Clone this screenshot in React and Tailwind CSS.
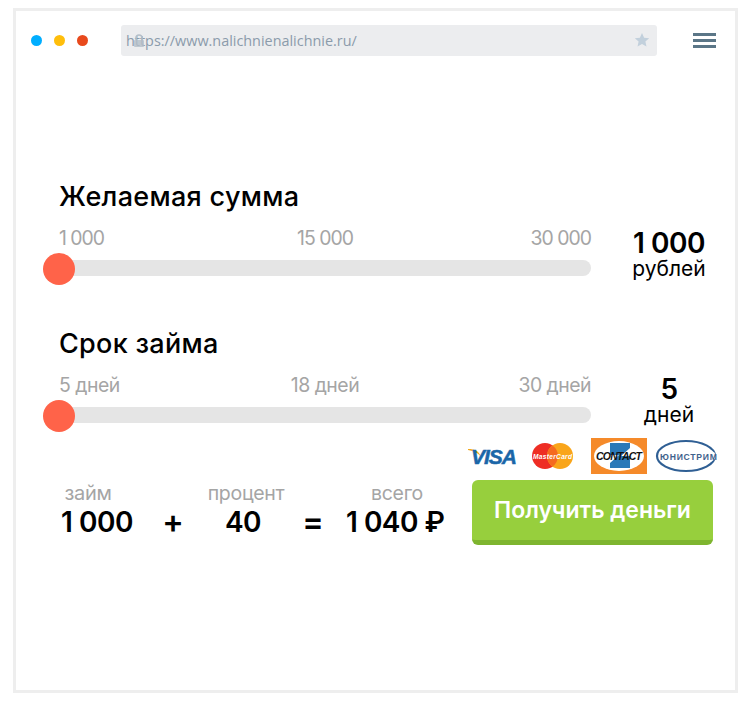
const sans = { fontFamily: '"Inter","Liberation Sans",sans-serif' };

function Logos() {
  return (
    <div className="flex items-center h-[36px] ml-[-5px] w-[250px]">
      <svg width="60" height="36" viewBox="0 0 60 36" className="shrink-0">
        <path d="M1 11 C8 11 12 13 14 19 C11 15 7 13 1 12Z" fill="#f0a91f" />
        <text x="4" y="26" fontFamily="Liberation Sans" fontWeight="700" fontStyle="italic" fontSize="21" fill="#1a66a8" stroke="#1a66a8" strokeWidth="0.5" textLength="46">VISA</text>
      </svg>
      <svg width="50" height="36" viewBox="0 0 50 36" className="ml-[4px] shrink-0">
        <circle cx="14" cy="18" r="13" fill="#ee2d24" />
        <circle cx="29" cy="18" r="13" fill="#f9a51a" />
        <path d="M21.500 7.400a13 13 0 0 1 0 21.200a13 13 0 0 1 0-21.200Z" fill="#f56a1f" />
        <text x="2" y="20.500" fontFamily="Liberation Sans" fontStyle="italic" fontWeight="700" fontSize="6.6" fill="#ffffff" textLength="39">MasterCard</text>
      </svg>
      <svg width="56" height="36" viewBox="0 0 56 36" className="ml-[10px] shrink-0">
        <rect width="56" height="36" fill="#f58a2a" />
        <ellipse cx="28" cy="18" rx="25" ry="15" fill="#ffffff" />
        <path d="M19 5h20v5l-9 8h9v12h-20v-5l9-8h-9Z" fill="#2a79b8" />
        <text x="5" y="22" fontFamily="Liberation Sans" fontStyle="italic" fontWeight="700" fontSize="10.5" fill="#111" textLength="46">CONTACT</text>
      </svg>
      <svg width="62" height="36" viewBox="0 0 62 36" className="ml-[8px] shrink-0">
        <ellipse cx="31" cy="18" rx="29" ry="15" fill="none" stroke="#2f5f94" strokeWidth="2.2" />
        <ellipse cx="34" cy="18" rx="27" ry="10" fill="#ffffff" />
        <text x="5" y="21.500" fontFamily="Liberation Sans" fontWeight="700" fontSize="8.6" fill="#3f628c" textLength="57">ЮНИСТРИМ</text>
      </svg>
    </div>
  );
}

function Slider({ title, labels, value, unit, top, labelClass }) {
  return (
    <div className="flex">
      <div className="w-[532px] shrink-0">
        <div className="text-[27px] leading-[32px] font-medium text-black tracking-[0.3px]" style={sans}>{title}</div>
        <div className={"grid grid-cols-3 mt-[13px] text-[#a5a5a5] leading-[24px] " + labelClass} style={sans}>
          <span className="text-left">{labels[0]}</span>
          <span className="text-center">{labels[1]}</span>
          <span className="text-right">{labels[2]}</span>
        </div>
        <div className="relative h-[16px] mt-[10px] rounded-full bg-[#e5e5e5]">
          <div className="absolute left-[-16px] top-[-7px] w-[32px] h-[32px] rounded-full bg-[#ff6349]" />
        </div>
      </div>
      <div className="w-[156px] shrink-0 text-center text-black" style={{ ...sans, paddingTop: top }}>
        <div className="text-[28px] leading-[30px] font-semibold tracking-[-0.5px]">{value}</div>
        <div className="text-[21px] leading-[20px] mt-[1px]">{unit}</div>
      </div>
    </div>
  );
}

function Stat({ label, value, w, labelClass }) {
  return (
    <div className={w + " shrink-0 text-center"} style={sans}>
      <div className={"flex justify-center leading-[22px] text-[#a5a5a5] tracking-[-0.3px] whitespace-nowrap " + labelClass}>{label}</div>
      <div className="mt-[2px] text-[28px] leading-[32px] font-semibold text-black tracking-[-0.5px] whitespace-nowrap">{value}</div>
    </div>
  );
}

export default function App() {
  return (
    <div className="w-[751px] h-[709px] bg-white pt-[8px] pl-[13px]">
      <div className="w-[725px] h-[685px] border-[3px] border-[#eeeeee] bg-white">
        <div className="flex items-center pt-[14px] pl-[15px]">
          <div className="flex gap-[12px] w-[90px]">
            <span className="w-[11px] h-[11px] rounded-full bg-[#00aeff]" />
            <span className="w-[11px] h-[11px] rounded-full bg-[#ffbe0b]" />
            <span className="w-[11px] h-[11px] rounded-full bg-[#e8491c]" />
          </div>
          <div className="relative flex items-center justify-between w-[536px] h-[31px] rounded-[3px] bg-[#ecedef] pl-[5px] pr-[7px]">
            <span className="text-[14.4px] text-[#8b9bab]" style={{ fontFamily: '"Open Sans",sans-serif' }}>https://www.nalichnienalichnie.ru/</span>
            <svg viewBox="0 0 12 14" className="absolute left-[12px] top-[9px] w-[12px] h-[14px]" aria-hidden="true">
              <path d="M3 6V4a3 3 0 0 1 6 0v2" fill="none" stroke="#b4bec8" strokeWidth="1.5" />
              <rect x="1" y="6" width="10" height="7" rx="1" fill="#b4bec8" opacity="0.8" />
            </svg>
            <svg viewBox="0 0 24 24" className="w-[16px] h-[16px] mt-[-2px]">
              <path d="M12 1.500l3.200 7 7.600.8-5.700 5.100 1.600 7.500L12 18l-6.700 3.900 1.600-7.500L1.200 9.300l7.600-.8Z" fill="#c2d0dc" />
            </svg>
          </div>
          <div className="ml-[36px] flex flex-col gap-[3px] w-[23px]">
            <span className="h-[3px] bg-[#5b7687]" />
            <span className="h-[3px] bg-[#5b7687]" />
            <span className="h-[3px] bg-[#5b7687]" />
          </div>
        </div>

        <div className="pl-[43px] pt-[125px]">
          <Slider title="Желаемая сумма" labels={["1 000", "15 000", "30 000"]} value="1 000" unit="рублей" top="47px" labelClass="text-[19.4px] tracking-[-1px]" />
          <div className="mt-[49px]">
            <Slider title="Срок займа" labels={["5 дней", "18 дней", "30 дней"]} value="5" unit="дней" top="46px" labelClass="text-[19.4px] tracking-[-0.5px]" />
          </div>
        </div>

        <div className="flex justify-between pl-[43px] pr-[22px] mt-[13px]">
          <div className="flex items-start pt-[44px]">
            <Stat label="займ" value="1 000" w="w-[76px]" labelClass="text-[20px] pr-[18px]" />
            <div className="w-[76px] pt-[24px] text-center text-[32px] leading-[32px] font-semibold text-black" style={sans}>+</div>
            <Stat label="процент" value="40" w="w-[64px]" labelClass="text-[19.5px] pl-[6px]" />
            <div className="w-[76px] pt-[24px] text-center text-[32px] leading-[32px] font-semibold text-black" style={sans}>=</div>
            <Stat label="всего" value="1 040 ₽" w="w-[98px] ml-[-5px]" labelClass="text-[19.5px] pl-[4px]" />
          </div>
          <div className="w-[241px]">
            <Logos />
            <button className="mt-[6px] w-[241px] h-[65px] rounded-[6px] bg-[#97cf3d] border-b-[5px] border-[#7eb52f] text-white text-[23px] font-semibold" style={sans}>Получить деньги</button>
          </div>
        </div>
      </div>
    </div>
  );
}
